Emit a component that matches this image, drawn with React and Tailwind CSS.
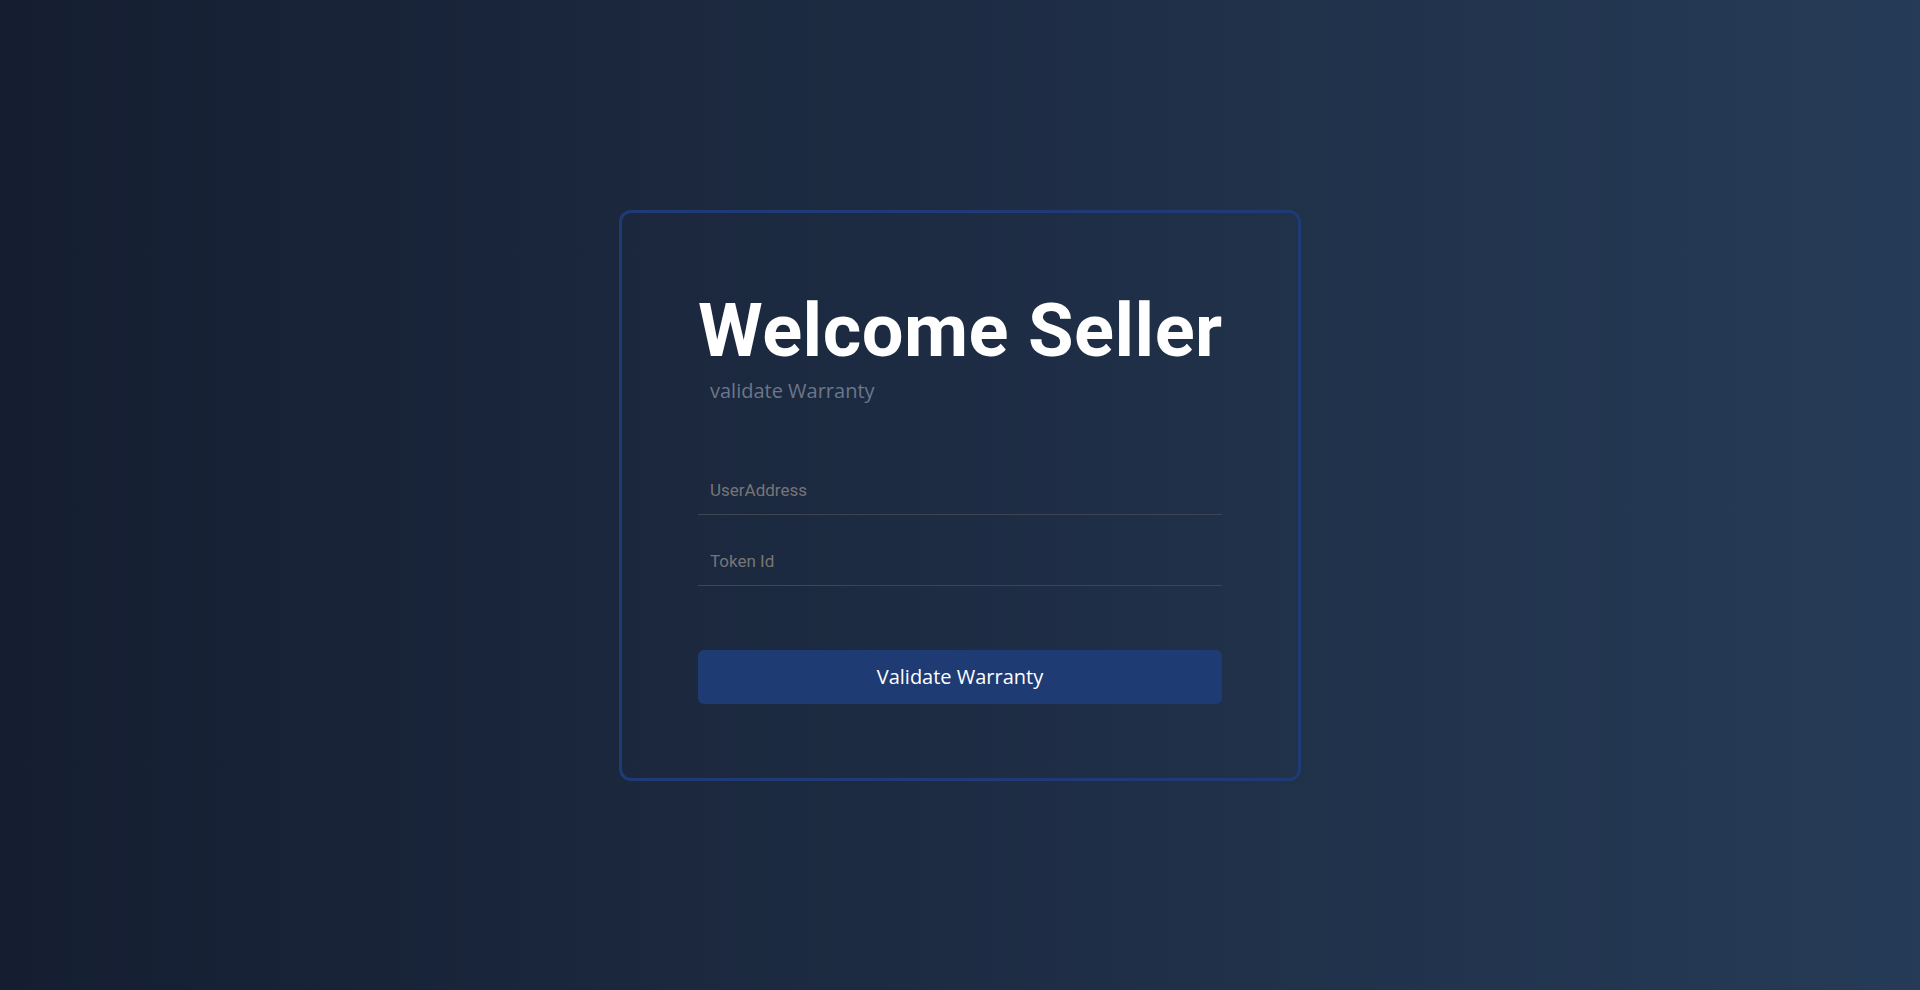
export default function App() {
  return (
    <div className="w-full h-[990px] flex items-center justify-center bg-gradient-to-r from-[#151e31] to-[#263b57]">
      <div className="w-[682px] border-[3px] border-[#1f3b75] rounded-xl pt-[81px] px-[76px] pb-[74px] flex flex-col">
        <h1 className="text-[74px] leading-none font-bold tracking-[0.5px] text-white whitespace-nowrap font-['Roboto',sans-serif]">
          Welcome Seller
        </h1>
        <p className="mt-[9px] pl-[12px] text-[20px] leading-[28px] text-[#6b7689] font-['Open_Sans',sans-serif]">
          validate Warranty
        </p>
        <input
          type="text"
          placeholder="UserAddress"
          className="mt-[62px] h-12 w-full bg-transparent border-b border-[#3d4553] px-3 text-[17px] text-white placeholder:text-[#767676] outline-none font-['Roboto',sans-serif]"
        />
        <input
          type="text"
          placeholder="Token Id"
          className="mt-[23px] h-12 w-full bg-transparent border-b border-[#3d4553] px-3 text-[17px] text-white placeholder:text-[#767676] outline-none font-['Roboto',sans-serif]"
        />
        <button
          type="button"
          className="mt-16 h-[54px] w-full rounded-md bg-[#1f3b73] text-white text-[20px] font-['Open_Sans',sans-serif]"
        >
          Validate Warranty
        </button>
      </div>
    </div>
  );
}
